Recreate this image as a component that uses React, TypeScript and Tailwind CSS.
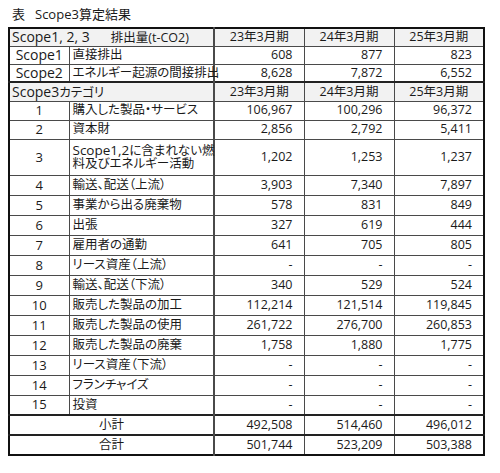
const font = {
  fontFamily: '"Open Sans", "Noto Sans CJK JP", sans-serif',
};

interface RowType {
  no: string;
  label: React.ReactNode;
  values: string[];
  tall?: boolean;
}

const scopeRows = [
  { no: 'Scope1', label: '直接排出', values: ['608', '877', '823'] },
  { no: 'Scope2', label: 'エネルギー起源の間接排出', values: ['8,628', '7,872', '6,552'] },
];

const categoryRows: RowType[] = [
  { no: '1', label: '購入した製品・サービス', values: ['106,967', '100,296', '96,372'] },
  { no: '2', label: '資本財', values: ['2,856', '2,792', '5,411'] },
  {
    no: '3',
    label: (
      <>
        <span className="text-[13.5px]">Scope1,2</span>に含まれない燃
        <br />
        料及びエネルギー活動
      </>
    ),
    values: ['1,202', '1,253', '1,237'],
    tall: true,
  },
  { no: '4', label: '輸送、配送（上流）', values: ['3,903', '7,340', '7,897'] },
  { no: '5', label: '事業から出る廃棄物', values: ['578', '831', '849'] },
  { no: '6', label: '出張', values: ['327', '619', '444'] },
  { no: '7', label: '雇用者の通勤', values: ['641', '705', '805'] },
  { no: '8', label: 'リース資産（上流）', values: ['-', '-', '-'] },
  { no: '9', label: '輸送、配送（下流）', values: ['340', '529', '524'] },
  { no: '10', label: '販売した製品の加工', values: ['112,214', '121,514', '119,845'] },
  { no: '11', label: '販売した製品の使用', values: ['261,722', '276,700', '260,853'] },
  { no: '12', label: '販売した製品の廃棄', values: ['1,758', '1,880', '1,775'] },
  { no: '13', label: 'リース資産（下流）', values: ['-', '-', '-'] },
  { no: '14', label: 'フランチャイズ', values: ['-', '-', '-'] },
  { no: '15', label: '投資', values: ['-', '-', '-'] },
];

const years = ['23年3月期', '24年3月期', '25年3月期'];

const cell = 'border border-[#4a4a4a] p-0 leading-none whitespace-nowrap';
const num = `${cell} text-right pr-[11px]`;

export default function App() {
  return (
    <div
      className="w-[500px] h-[473px] bg-white text-[#1a1a1a] text-[12.5px] [font-feature-settings:'palt']"
      style={font}
    >
      <div className="pt-[6px] pl-[12px] h-[27px] text-[13px] leading-[17px]">
        表<span className="ml-[10px]">Scope3算定結果</span>
      </div>
      <table className="ml-[8px] table-fixed border-collapse border-2 border-[#111] w-[475px]">
        <colgroup>
          <col className="w-[60px]" />
          <col className="w-[145px]" />
          <col className="w-[90px]" />
          <col className="w-[90px]" />
          <col className="w-[90px]" />
        </colgroup>
        <tbody>
          <tr className="h-[18px] bg-[#f2f2f2]">
            <td colSpan={2} className={`${cell} pl-[2px] border-r-2`}>
              <span className="text-[14px]">Scope1, 2, 3</span>
              <span className="ml-[21px]">排出量(t-CO2)</span>
            </td>
            {years.map((y) => (
              <td key={y} className={`${cell} text-center`}>{y}</td>
            ))}
          </tr>
          {scopeRows.map((r) => (
            <tr key={r.no} className="h-[18px]">
              <td className={`${cell} text-center text-[14px]`}>{r.no}</td>
              <td className={`${cell} pl-[3px] border-r-2`}>{r.label}</td>
              {r.values.map((v, i) => (
                <td key={i} className={num}>{v}</td>
              ))}
            </tr>
          ))}
          <tr className="h-[19px] bg-[#f2f2f2] border-t-2 border-[#222]">
            <td colSpan={2} className={`${cell} pl-[2px] border-r-2`}>
              <span className="text-[14px]">Scope3</span>カテゴリ
            </td>
            {years.map((y) => (
              <td key={y} className={`${cell} text-center`}>{y}</td>
            ))}
          </tr>
          {categoryRows.map((r, idx) => (
            <tr key={r.no} className={r.tall ? 'h-[36px]' : idx < 2 ? 'h-[19px]' : 'h-[20px]'}>
              <td className={`${cell} text-center text-[13px]`}>{r.no}</td>
              <td className={`${cell} pl-[3px] border-r-2 ${r.tall ? 'leading-[16px]' : ''}`}>{r.label}</td>
              {r.values.map((v, i) => (
                <td key={i} className={num}>{v}</td>
              ))}
            </tr>
          ))}
          <tr className="h-[20px] border-t-2 border-[#222]">
            <td colSpan={2} className={`${cell} text-center border-r-2`}>小計</td>
            {['492,508', '514,460', '496,012'].map((v, i) => (
              <td key={i} className={num}>{v}</td>
            ))}
          </tr>
          <tr className="h-[20px] border-t-2 border-[#222]">
            <td colSpan={2} className={`${cell} text-center border-r-2`}>合計</td>
            {['501,744', '523,209', '503,388'].map((v, i) => (
              <td key={i} className={num}>{v}</td>
            ))}
          </tr>
        </tbody>
      </table>
    </div>
  );
}
